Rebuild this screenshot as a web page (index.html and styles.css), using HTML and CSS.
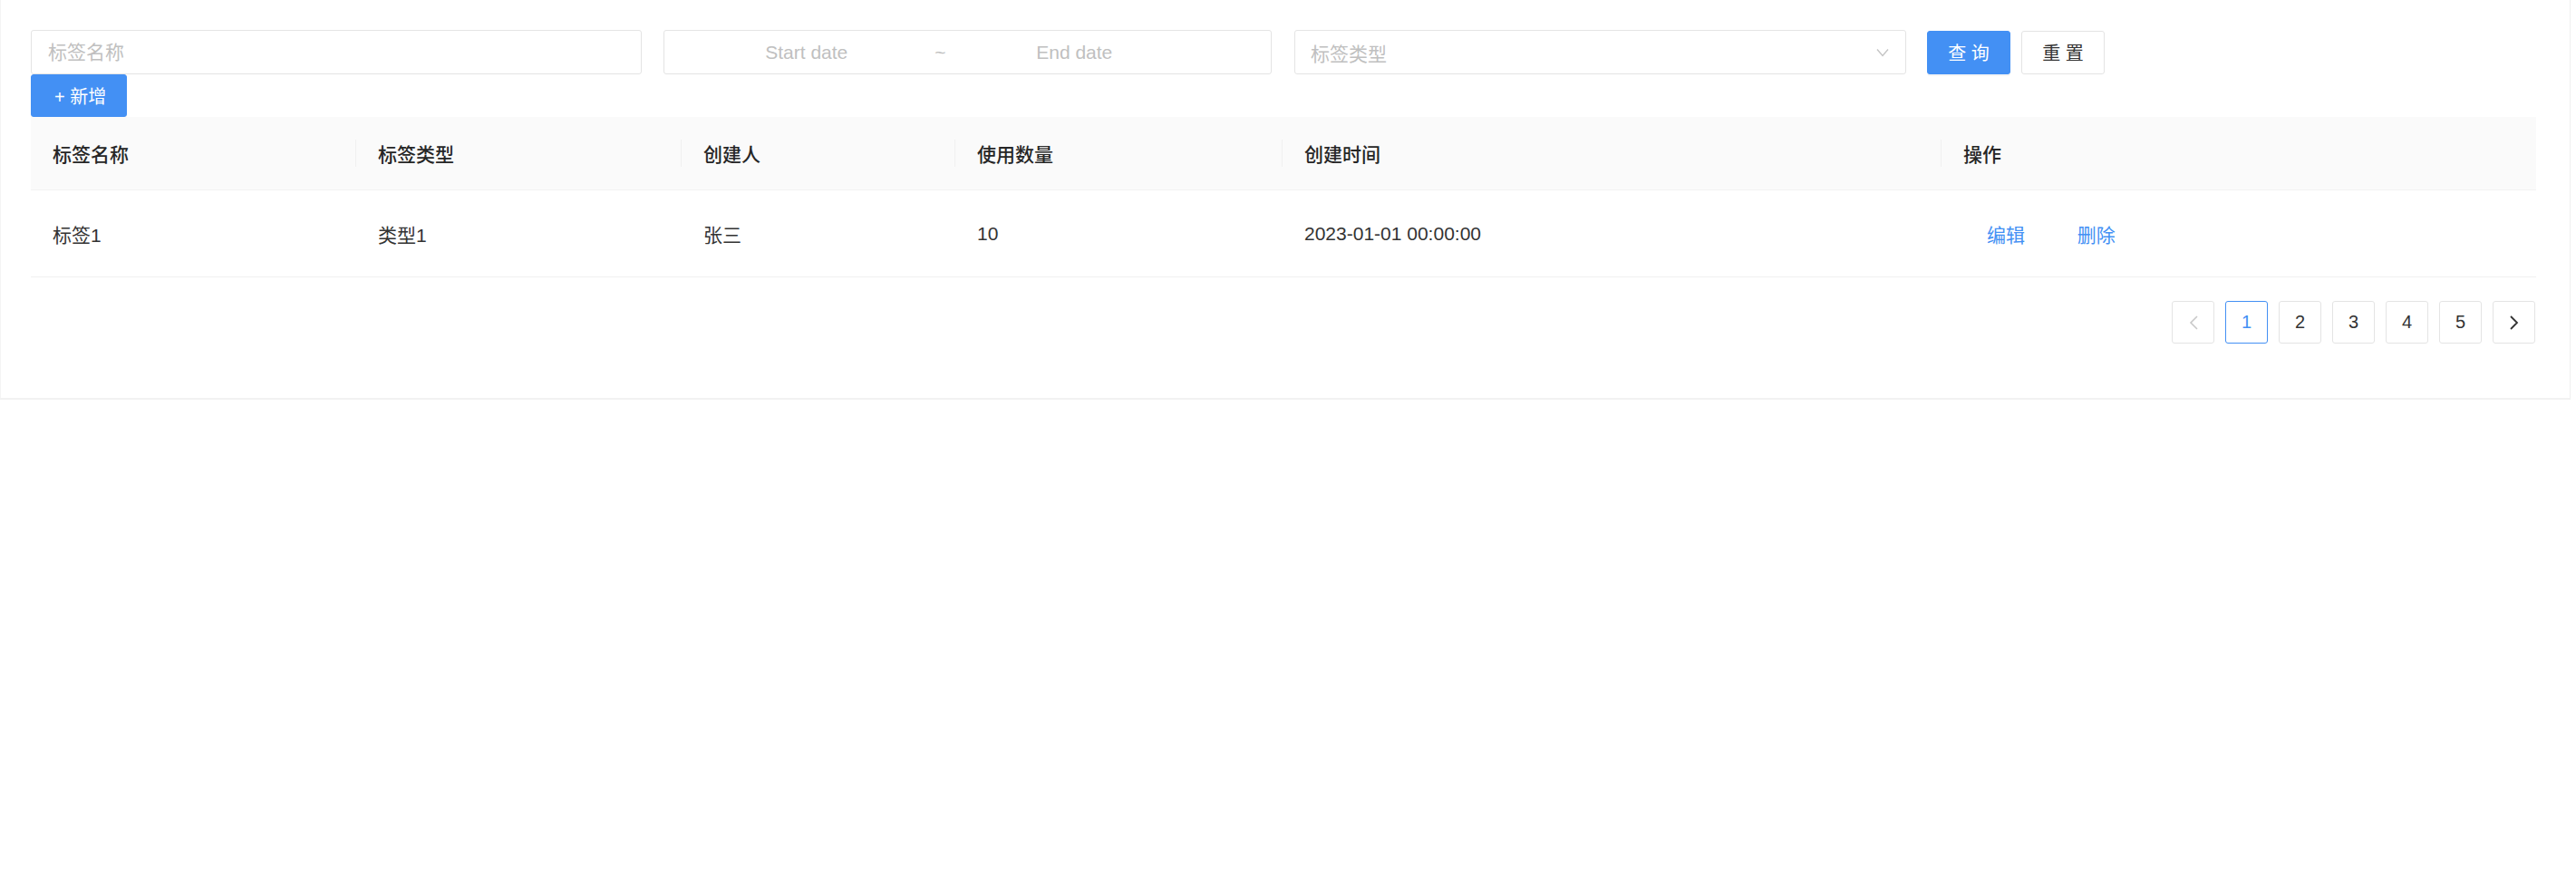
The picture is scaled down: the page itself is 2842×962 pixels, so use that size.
FILE: index.html
```html
<!DOCTYPE html>
<html lang="zh-CN">
<head>
    <meta charset="UTF-8">
    <meta name="viewport" content="width=device-width, initial-scale=1.0">
    <title>标签管理</title>
    <link rel="stylesheet" href="styles.css">
</head>
<body>
    <div class="card">
        <div class="search-bar">
            <input class="field field-name" type="text" placeholder="标签名称">
            <div class="field range-picker">
                <input class="range-input" type="text" placeholder="Start date">
                <span class="range-sep">~</span>
                <input class="range-input" type="text" placeholder="End date">
            </div>
            <div class="field select">
                <span class="select-placeholder">标签类型</span>
                <svg class="select-arrow" width="14" height="10" viewBox="0 0 14 10">
                    <path d="M1 1.5 L7 8.5 L13 1.5" fill="none" stroke="#c4c4c4" stroke-width="1.4"/>
                </svg>
            </div>
            <button class="btn btn-primary">查 询</button>
            <button class="btn btn-default">重 置</button>
        </div>

        <button class="btn btn-primary btn-add">+ 新增</button>

        <table class="table">
            <colgroup>
                <col class="col-name">
                <col class="col-type">
                <col class="col-owner">
                <col class="col-count">
                <col class="col-time">
                <col class="col-action">
            </colgroup>
            <thead>
                <tr>
                    <th>标签名称</th>
                    <th>标签类型</th>
                    <th>创建人</th>
                    <th>使用数量</th>
                    <th>创建时间</th>
                    <th>操作</th>
                </tr>
            </thead>
            <tbody>
                <tr>
                    <td>标签1</td>
                    <td>类型1</td>
                    <td>张三</td>
                    <td>10</td>
                    <td>2023-01-01 00:00:00</td>
                    <td class="actions">
                        <a class="link-btn" href="#">编辑</a>
                        <a class="link-btn" href="#">删除</a>
                    </td>
                </tr>
            </tbody>
        </table>

        <ul class="pagination">
            <li class="page-item disabled">
                <svg width="12" height="18" viewBox="0 0 12 18"><path d="M10 2 L3 9 L10 16" fill="none" stroke="currentColor" stroke-width="1.6"/></svg>
            </li>
            <li class="page-item active">1</li>
            <li class="page-item">2</li>
            <li class="page-item">3</li>
            <li class="page-item">4</li>
            <li class="page-item">5</li>
            <li class="page-item">
                <svg width="12" height="18" viewBox="0 0 12 18"><path d="M2 2 L9 9 L2 16" fill="none" stroke="currentColor" stroke-width="1.8"/></svg>
            </li>
        </ul>
    </div>
</body>
</html>
```

FILE: styles.css
```css
body {
    margin: 0;
    background-color: #fff;
    font-family: "Liberation Sans", "Noto Sans CJK SC", sans-serif;
    font-size: 21px;
    color: #333;
}
.card {
    margin-right: 6px;
    padding: 33px 38px 60px 33px;
    border-right: 1px solid #f0f0f0;
    border-bottom: 2px solid #f2f2f2;
    border-left: 1px solid #f4f4f4;
    background-color: #fff;
}
.search-bar {
    display: flex;
    align-items: center;
}
.field {
    box-sizing: border-box;
    height: 49px;
    border: 1px solid #e4e4e4;
    border-radius: 3px;
    background-color: #fff;
    font-family: inherit;
    font-size: 21px;
    color: #333;
}
.field::placeholder, .range-input::placeholder {
    color: #c0c0c0;
}
.field-name {
    width: 674px;
    padding: 0 18px;
    outline: none;
}
.range-picker {
    display: flex;
    align-items: center;
    width: 671px;
    margin-left: 24px;
    padding: 0 76px 0 16px;
}
.range-input {
    flex: 1;
    min-width: 0;
    border: none;
    outline: none;
    text-align: center;
    font-family: inherit;
    font-size: 21px;
    background: transparent;
}
.range-sep {
    width: 14px;
    color: #c0c0c0;
    text-align: center;
}
.select {
    display: flex;
    align-items: center;
    justify-content: space-between;
    width: 675px;
    margin-left: 25px;
    padding: 0 18px 0 17px;
}
.select-placeholder {
    color: #c0c0c0;
}
.btn {
    box-sizing: border-box;
    height: 48px;
    border-radius: 3px;
    font-family: inherit;
    font-size: 20px;
    cursor: pointer;
}
.btn-primary {
    border: 1px solid #4390f4;
    background-color: #4390f4;
    color: #fff;
    box-shadow: 0 2px 0 rgba(0, 0, 0, 0.04);
}
.btn-default {
    border: 1px solid #e4e4e4;
    background-color: #fff;
    color: #333;
}
.search-bar .btn {
    width: 92px;
}
.search-bar .btn-primary {
    margin-left: 23px;
}
.search-bar .btn-default {
    margin-left: 12px;
}
.btn-add {
    display: block;
    height: 47px;
    padding: 0 22px 0 25px;
}
.table {
    width: 100%;
    border-collapse: collapse;
    table-layout: fixed;
}
.col-name { width: 359px; }
.col-type { width: 359px; }
.col-owner { width: 302px; }
.col-count { width: 361px; }
.col-time { width: 727px; }
.col-action { width: 656px; }
.table th {
    position: relative;
    height: 80px;
    padding: 0 24px;
    background-color: #fafafa;
    border-bottom: 1px solid #f2f2f2;
    text-align: left;
    font-weight: 500;
    color: #262626;
}
.table th:not(:last-child)::after {
    content: "";
    position: absolute;
    top: 25px;
    right: 0;
    width: 1px;
    height: 30px;
    background-color: #f0f0f0;
}
.table td {
    height: 95px;
    padding: 0 24px;
    border-bottom: 1px solid #f0f0f0;
    color: #333;
}
.table td.actions {
    padding: 0 24px;
}
.link-btn {
    display: inline-block;
    padding: 0 26px;
    color: #4390f4;
    text-decoration: none;
}
.pagination {
    display: flex;
    justify-content: flex-end;
    gap: 12px;
    margin: 26px 0 0;
    padding: 0;
    list-style: none;
}
.page-item {
    box-sizing: border-box;
    display: flex;
    align-items: center;
    justify-content: center;
    width: 47px;
    height: 47px;
    border: 1px solid #e4e4e4;
    border-radius: 3px;
    color: #333;
    font-size: 20px;
    cursor: pointer;
}
.page-item.active {
    border-color: #4390f4;
    color: #4390f4;
}
.page-item.disabled {
    color: #c8c8c8;
    cursor: not-allowed;
}
```
